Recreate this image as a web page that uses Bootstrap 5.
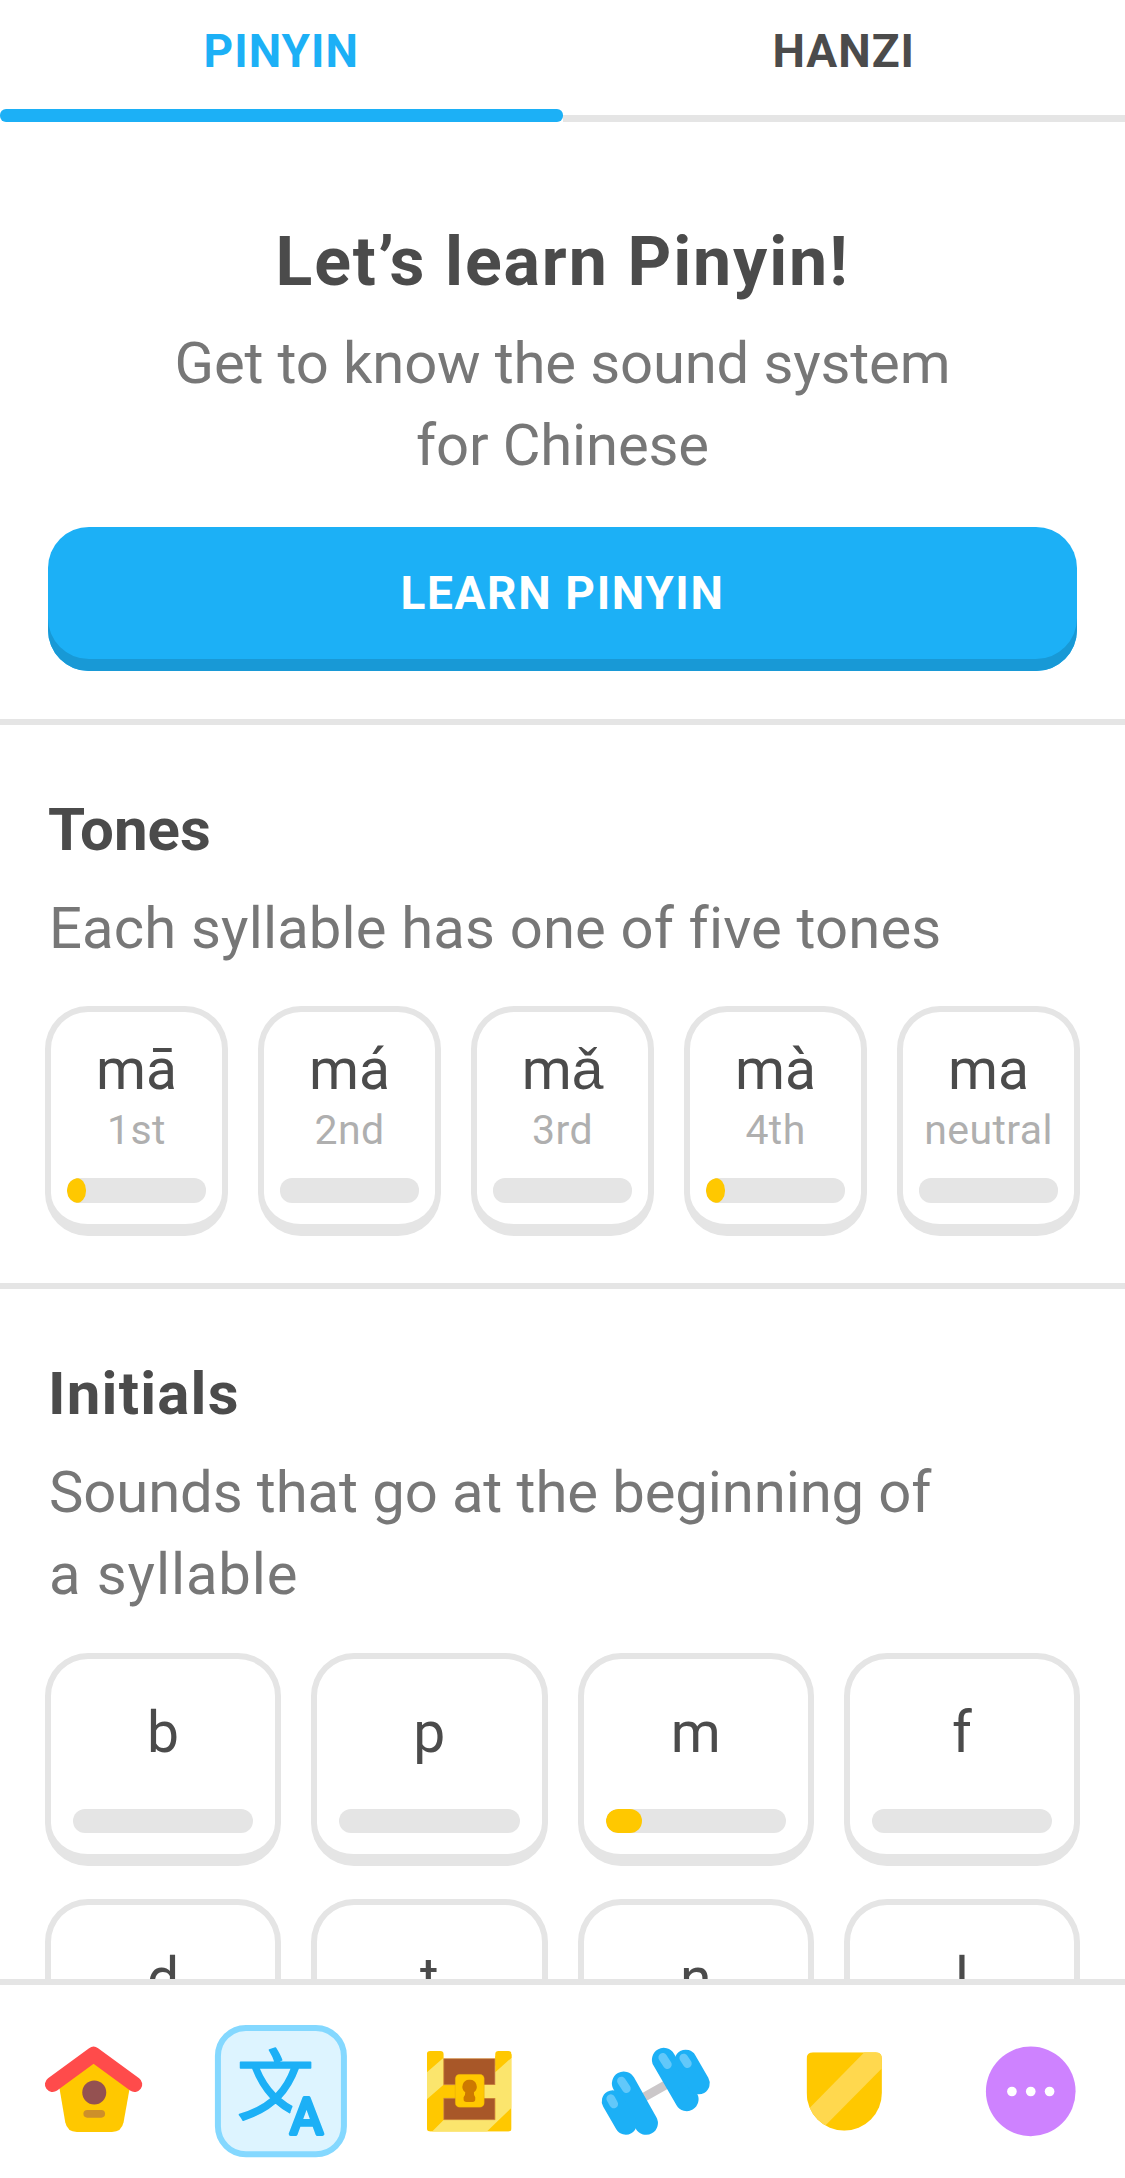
<!DOCTYPE html>
<html lang="en">
<head>
<meta charset="utf-8">
<meta name="viewport" content="width=device-width, initial-scale=1">
<title>Pinyin</title>
<link href="https://cdn.jsdelivr.net/npm/bootstrap@5.3.0/dist/css/bootstrap.min.css" rel="stylesheet">
<style>
:root{--ink:#4b4b4b;--soft:#777;--faint:#afafaf;--rule:#e5e5e5;--sky:#1cb0f6;--gold:#ffc800}
body{font-family:Roboto,"Liberation Sans",sans-serif;color:var(--ink);background:#fff}
.screen{height:2178px;overflow:hidden}
.tabs{height:121.5px}
.tab-btn{color:var(--ink);font-weight:700;font-size:46px;line-height:103px;letter-spacing:1px}
.tab-btn::after{content:"";height:6.5px;background:var(--rule)}
.tab-btn.active{color:var(--sky)}
.tab-btn.active::after{height:12.5px;background:var(--sky);border-radius:6px}
.hero{padding:99px 48px 48px;border-bottom:6px solid var(--rule)}
.hero h1{font-size:68px;line-height:82px;font-weight:700;margin-bottom:19.5px;letter-spacing:1.9px}
.intro{font-size:58px;line-height:82px;color:var(--soft);letter-spacing:.15px}
.hero .intro{margin-bottom:40.8px;letter-spacing:-.15px}
.learn{height:144.5px;border:0;border-radius:41px;background:var(--sky);box-shadow:inset 0 -12px #1899d6;color:#fff;font-weight:700;font-size:46px;line-height:133px;padding:0 0 12px;letter-spacing:1.65px}
.learn:hover{background:var(--sky);color:#fff}
.block{padding:68.5px 45px 47px;border-bottom:6px solid var(--rule)}
.block h2{font-size:60px;line-height:72px;font-weight:700;margin:0 3px 21.2px}
.block .intro{margin:0 4px 37.5px}
.initials{padding-top:68.5px;border:0}
.initials h2{letter-spacing:1.2px}
.initials .intro{letter-spacing:-.1px}
.loose{letter-spacing:.9px}
.tones{gap:30px}
.letters{display:grid;grid-template-columns:repeat(4,1fr);gap:32.5px 30px}
.tile{flex:1 1 0;min-width:0;border:6px solid var(--rule);border-bottom-width:12.5px;border-radius:43px;background:#fff;text-align:center}
.tone-tile{height:230px;padding:24.5px 16px 0}
.letter-tile{height:213.5px;padding:41.7px 22px 0}
.glyph{font-size:57px;line-height:66px;white-space:nowrap}
.alt-a{font-family:"Liberation Sans",sans-serif;line-height:1}
.ordinal{font-size:41px;line-height:46px;color:var(--faint);margin:4.5px -10px 25px;letter-spacing:.4px}
.tone-tile .glyph{height:66px}
.letter-tile .glyph{margin-bottom:42.3px}
.progress{height:24.5px;border-radius:12px;background:var(--rule)}
.progress-bar{background:var(--gold);border-radius:12px}
.tone-tile .progress-bar{border-radius:50%}
.dock{height:199.5px;border-top:6px solid var(--rule);background:#fff;padding-top:40.5px}
.dock svg{width:132px;height:132px;overflow:visible;display:block}
</style>
</head>
<body>
<div class="screen d-flex flex-column">
  <header class="tabs d-flex flex-shrink-0 text-center">
    <div class="tab-btn active w-50 d-flex flex-column justify-content-between">PINYIN</div>
    <div class="tab-btn w-50 d-flex flex-column justify-content-between">HANZI</div>
  </header>
  <main class="flex-grow-1 overflow-hidden">
    <section class="hero text-center">
      <h1>Let’s learn Pinyin!</h1>
      <p class="intro">Get to know the sound system<br>for Chinese</p>
      <button class="btn learn w-100 d-block">LEARN PINYIN</button>
    </section>
    <section class="block">
      <h2>Tones</h2>
      <p class="intro">Each syllable has one of five tones</p>
      <div class="tones d-flex">
        <div class="tile tone-tile"><div class="glyph">mā</div><div class="ordinal">1st</div><div class="progress"><div class="progress-bar" style="width:14%"></div></div></div>
        <div class="tile tone-tile"><div class="glyph">má</div><div class="ordinal">2nd</div><div class="progress"></div></div>
        <div class="tile tone-tile"><div class="glyph">m<span class="alt-a">ǎ</span></div><div class="ordinal">3rd</div><div class="progress"></div></div>
        <div class="tile tone-tile"><div class="glyph">mà</div><div class="ordinal">4th</div><div class="progress"><div class="progress-bar" style="width:14%"></div></div></div>
        <div class="tile tone-tile"><div class="glyph">ma</div><div class="ordinal">neutral</div><div class="progress"></div></div>
      </div>
    </section>
    <section class="block initials">
      <h2>Initials</h2>
      <p class="intro">Sounds that go at the beginning of<br><span class="loose">a syllable</span></p>
      <div class="letters">
        <div class="tile letter-tile"><div class="glyph">b</div><div class="progress"></div></div>
        <div class="tile letter-tile"><div class="glyph">p</div><div class="progress"></div></div>
        <div class="tile letter-tile"><div class="glyph">m</div><div class="progress"><div class="progress-bar" style="width:20%"></div></div></div>
        <div class="tile letter-tile"><div class="glyph">f</div><div class="progress"></div></div>
        <div class="tile letter-tile"><div class="glyph">d</div><div class="progress"></div></div>
        <div class="tile letter-tile"><div class="glyph">t</div><div class="progress"></div></div>
        <div class="tile letter-tile"><div class="glyph">n</div><div class="progress"></div></div>
        <div class="tile letter-tile"><div class="glyph">l</div><div class="progress"></div></div>
      </div>
    </section>
  </main>
  <nav class="dock d-flex flex-shrink-0">
    <div class="col-2 d-flex justify-content-center">
      <svg viewBox="83.25 195 396 396"><path fill="#ffc800" d="M280 300 390 375 370 487Q364 516 335 516H230Q201 516 195 487L176 375Z"/><path d="M157 373 280 283 403 373" fill="none" stroke="#ff4b4b" stroke-width="46" stroke-linecap="round" stroke-linejoin="round"/><circle cx="282" cy="397.500" r="36" fill="#945151"/><rect x="249.500" y="450" width="65" height="23" rx="11.500" fill="#cd8f2a"/></svg>
    </div>
    <div class="col-2 d-flex justify-content-center">
      <svg viewBox="645.75 195 396 396"><defs><clipPath id="cut"><path d="M690 230H960V380H900L870 462V500H690Z"/></clipPath></defs><rect x="654.500" y="204" width="378" height="379" rx="84" fill="#ddf4ff" stroke="#84d8ff" stroke-width="18"/><g fill="#1cb0f6" stroke="#1cb0f6" stroke-linejoin="round" font-weight="400"><g clip-path="url(#cut)"><text x="711" y="463" font-size="232" font-family="Noto Sans CJK SC,sans-serif" stroke-width="5">文</text></g><text x="871" y="523" font-size="152" font-family="Roboto,sans-serif" stroke-width="12">A</text></g></svg>
    </div>
    <div class="col-2 d-flex justify-content-center">
      <svg viewBox="68.25 195 396 396"><defs><clipPath id="chest"><path d="M150 273H180Q190 273 190 283V296H345V283Q345 273 355 273H384Q394 273 394 283V505Q394 515 384 515H150Q140 515 140 505V283Q140 273 150 273Z"/></clipPath></defs><g clip-path="url(#chest)"><path fill="#ffc800" d="M140 273H395V515H140Z"/><path fill="#fbe56d" d="M140 337 190 293V374L140 418ZM155 515 190 480H345V373H312V333L394 293V443L319 515ZM345 337 394 293V400H345Z"/></g><path fill="#ffc800" d="M345 290V337L394 293V283H350Z"/><path fill="#a85728" stroke="#cf8a52" stroke-width="2" d="M190.500 296H344V374H190.500ZM190.500 415H344V479H190.500Z"/><path fill="#fbe56d" d="M311 375H350V414H311Z"/><rect x="225" y="343" width="87" height="99" rx="13" fill="#ffc800" stroke="#d99b12" stroke-width="1"/><path fill="#cd7900" d="M268 359A20 21 0 0 1 281 397Q280 403 285 412V418Q285 426 277 426H259Q250 426 250 418V412Q256 403 255 397A20 21 0 0 1 268 359Z"/></svg>
    </div>
    <div class="col-2 d-flex justify-content-center">
      <svg viewBox="630.75 195 396 396" fill="none" stroke-linecap="round"><path d="M785 416 870 368" stroke="#cbc7c9" stroke-width="27"/><g stroke="#1cb0f6" stroke-width="71"><path d="M732 370 799 489M852 299 921 418"/><path stroke-width="66" d="M699 424 738 491M918 302 957 370"/></g><path stroke="#62c8fa" stroke-width="26" d="M725 363 740 386M693 416 702 432M849 292 863 314M912 294 923 311"/></svg>
    </div>
    <div class="col-2 d-flex justify-content-center">
      <svg viewBox="53.25 195 396 396"><defs><clipPath id="shield"><path d="M158 277H346Q365 277 365 297V398A113 114 0 0 1 139 398V297Q139 277 158 277Z"/></clipPath></defs><g clip-path="url(#shield)"><path fill="#ffc800" d="M130 270H370V520H130Z"/><path fill="#ffd84e" d="M314 275H375V315L190 502 140 452Z"/></g></svg>
    </div>
    <div class="col-2 d-flex justify-content-center">
      <svg viewBox="615.75 195 396 396"><circle cx="813" cy="394" r="134.500" fill="#ce82ff"/><g fill="#fff"><circle cx="756.500" cy="394.500" r="14.500"/><circle cx="813" cy="394.500" r="14.500"/><circle cx="869.500" cy="394.500" r="14.500"/></g></svg>
    </div>
  </nav>
</div>
<script src="https://cdn.jsdelivr.net/npm/bootstrap@5.3.0/dist/js/bootstrap.bundle.min.js"></script>
</body>
</html>
